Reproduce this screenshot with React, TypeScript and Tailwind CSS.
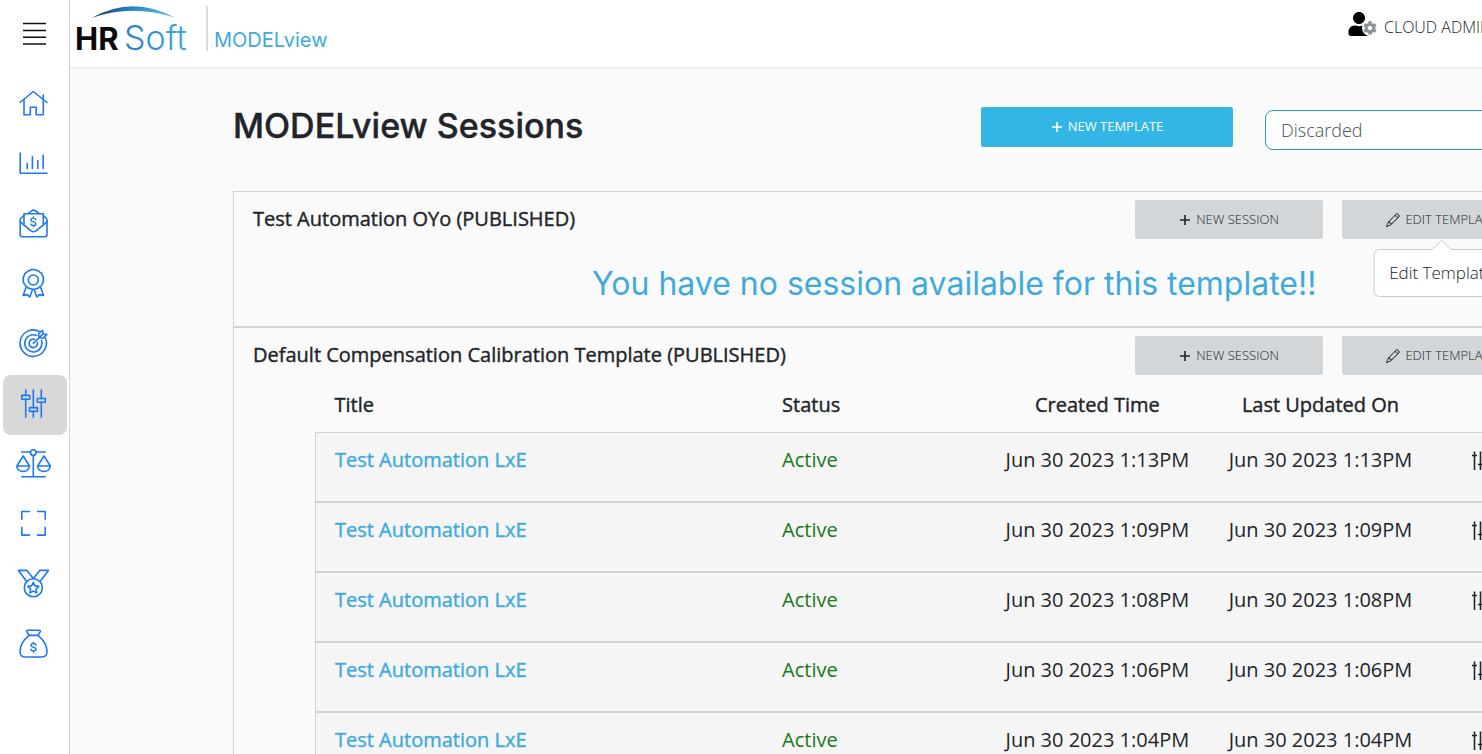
import type { ReactNode } from "react";
import { BsPencil } from "react-icons/bs";
import { FaCog, FaUser } from "react-icons/fa";

const DOLLAR = "M3 -2.6C2.6 -4 1.4 -4.4 0 -4.4C-1.8 -4.4 -3 -3.6 -3 -2.2C-3 1 3 -0.8 3 2.2C3 3.6 1.8 4.4 0 4.4C-1.6 4.4 -2.8 3.8 -3.1 2.4M0 -6V-4.4M0 4.4V6";

type NavItem = { label: string; icon: ReactNode; active?: boolean };

const navItems: NavItem[] = [
  {
    label: "Home",
    icon: (
      <>
        <path d="M5 17.5L18.3 6.5L32 17.5" />
        <path d="M9 14.5V29.7H15.3V22.3H21.2V29.7H28.3V14.5" />
        <path d="M28.3 14V10" />
      </>
    ),
  },
  {
    label: "Reports",
    icon: <path d="M5.2 8V28.2H32M12.2 18.5V23.5M17.4 11.8V23.5M22.8 15.5V23.5M28.2 10.2V23.5" />,
  },
  {
    label: "Compensation",
    icon: (
      <>
        <path d="M9 10.5L6.2 13Q5.2 14 5.2 15.2V29.5Q5.2 31.7 7.4 31.7H29.8Q32 31.7 32 29.5V15.2Q32 14 31 13L28.3 10.5" />
        <path d="M9 19V8.8H28.3V19" />
        <path d="M5.2 16.8L16 25.8Q18.5 27.6 21 25.8L32 16.8" />
        <path d="M13.2 8.5L16.3 6Q18.5 4.3 20.7 6L24 8.5" />
        <path transform="translate(18.4 16.8) scale(0.85)" d={DOLLAR} />
      </>
    ),
  },
  {
    label: "Recognition",
    icon: (
      <>
        <path d="M18.3 4.8Q20.4 4 21.8 5.6Q24.2 5.4 25 7.6Q27.4 8.3 27.4 10.7Q29.2 12.5 28.1 14.8Q29 17.2 27.2 18.8Q26.8 21.2 24.5 21.8Q23.2 24 20.8 23.6Q18.3 25 15.9 23.6Q13.4 24 12.2 21.8Q9.8 21.2 9.4 18.8Q7.6 17.2 8.5 14.8Q7.4 12.5 9.2 10.7Q9.2 8.3 11.6 7.6Q12.4 5.4 14.8 5.6Q16.2 4 18.3 4.8Z" />
        <circle cx="18.3" cy="15" r="5" />
        <path d="M11 22.5L8.2 30.4L12.3 29.6L14.8 32L17.5 24.5M25.7 22.5L28.5 30.4L24.4 29.6L21.9 32L19.2 24.5" />
      </>
    ),
  },
  {
    label: "Goals",
    icon: (
      <>
        <path d="M24.8 6.7A13.2 13.2 0 1 0 30.4 13" />
        <path d="M21.6 10.4A8.6 8.6 0 1 0 26.5 15.6" />
        <path d="M19.6 14.4A4.2 4.2 0 1 0 22.4 17.6" />
        <path d="M18.3 18.3L27.6 9.4M24.2 12.6L23.6 9L27.4 5.2L28.2 8.8L31.8 9.6L28 13.2Z" />
      </>
    ),
  },
  {
    label: "Calibration",
    active: true,
    icon: (
      <>
        <path d="M10.7 5V10.3M10.7 14.3V32.3M18.3 5V22.6M18.3 26.4V32.3M26.3 5V13.6M26.3 17.3V32.3" />
        <rect x="6.7" y="10.4" width="8" height="3.8" rx="0.5" />
        <rect x="14.5" y="22.6" width="8" height="3.8" rx="0.5" />
        <rect x="22.3" y="13.5" width="8" height="3.8" rx="0.5" />
      </>
    ),
  },
  {
    label: "Pay equity",
    icon: (
      <>
        <path d="M6.7 7H15.5M21.2 7H30.3M18.3 10.6V31.7M6.7 31.7H30.3" />
        <circle cx="18.3" cy="7.6" r="2.8" />
        <path d="M8.2 11L1.8 21H14.5ZM1.8 21C2.2 24.5 4.8 26.4 8.2 26.4S14 24.5 14.5 21" />
        <path d="M29 11L22.6 21H35.3ZM22.6 21C23 24.5 25.6 26.4 29 26.4S34.8 24.5 35.3 21" />
      </>
    ),
  },
  {
    label: "Fullscreen",
    icon: <path d="M6.8 14.2V6.5H14.5M22.5 6.5H30.2V14.2M30.2 22.4V30.1H22.5M14.5 30.1H6.8V22.4" />,
  },
  {
    label: "Awards",
    icon: (
      <>
        <circle cx="18.3" cy="22.8" r="9" />
        <path d="M18.3 17.4L20 20.9L23.8 21.4L21 24.1L21.7 27.9L18.3 26.1L14.9 27.9L15.6 24.1L12.8 21.4L16.6 20.9Z" />
        <path d="M11.8 16.4L3.4 5.4H12L18.3 13.6L24.8 5.4H33.4L25 16.4" />
      </>
    ),
  },
  {
    label: "Bonuses",
    icon: (
      <>
        <path d="M14 10.4L11.6 6.4Q11.4 5.3 12.6 5.3H24.4Q25.6 5.3 25.4 6.4L23 10.4Z" />
        <path d="M14 10.4C8.5 15 5 20 5 26.5C5 30.5 7 32 10.5 32H26.5C30 32 32 30.5 32 26.5C32 20 28.5 15 23 10.4" />
        <path transform="translate(18.5 22.2) scale(0.85)" d={DOLLAR} />
      </>
    ),
  },
];

const sessions = ["1:13PM", "1:09PM", "1:08PM", "1:06PM", "1:04PM", "1:02PM"].map((time) => ({
  title: "Test Automation LxE",
  status: "Active",
  date: `Jun 30 2023 ${time}`,
}));

function PlusIcon() {
  return (
    <svg width="12" height="12" viewBox="0 0 12 12" fill="none" stroke="currentColor" strokeWidth="1.6" aria-hidden="true">
      <path d="M6 1V11M1 6H11" />
    </svg>
  );
}

function Sidebar() {
  return (
    <aside className="flex w-[70px] shrink-0 flex-col border-r border-[#d4d4d4] bg-white">
      <button type="button" aria-label="Menu" className="flex h-[75px] items-start justify-center pt-[22px]">
        <svg width="24" height="24" viewBox="0 0 24 24" stroke="#111" strokeWidth="1.6" aria-hidden="true">
          <path d="M0 1.5H23M0 8.5H23M0 15.3H23M0 22H23" />
        </svg>
      </button>
      <nav className="flex flex-col pr-[2px] pl-[3px]">
        {navItems.map((item) => (
          <a
            key={item.label}
            href="#"
            aria-label={item.label}
            className={`flex h-[60px] items-center rounded-lg pl-3 ${item.active ? "bg-[#d8d8d8]" : ""}`}
          >
            <svg
              width="40"
              height="40"
              viewBox="0 0 40 40"
              fill="none"
              stroke="#1f78f2"
              strokeWidth="1.6"
              strokeLinecap="round"
              strokeLinejoin="round"
              aria-hidden="true"
            >
              {item.icon}
            </svg>
          </a>
        ))}
      </nav>
    </aside>
  );
}

function Header() {
  return (
    <header className="flex h-[69px] items-start border-b-2 border-[#f0f0f0] bg-white pl-[6px]">
      <a href="#" aria-label="HRSoft MODELview" className="flex w-[1271px] items-start">
        <svg width="136" height="60" viewBox="0 0 136 60" aria-hidden="true">
          <defs>
            <linearGradient id="arc" x1="0" x2="1">
              <stop offset="0" stopColor="#1d3a63" />
              <stop offset="0.5" stopColor="#2a86c6" />
              <stop offset="1" stopColor="#5cc4ee" />
            </linearGradient>
            <linearGradient id="soft" x1="0" x2="1">
              <stop offset="0" stopColor="#2a7fc6" />
              <stop offset="1" stopColor="#3fa9dc" />
            </linearGradient>
          </defs>
          <path d="M15.500 18Q57 -5.500 99.500 18Q57 3.500 15.500 18Z" fill="url(#arc)" />
          <text x="-1" y="50" fontFamily="Inter, sans-serif" fontSize="31" fontWeight="700" fill="#0a0a0a">HR</text>
          <text x="48" y="50" fontFamily="Inter, sans-serif" fontSize="34" fontWeight="300" fill="url(#soft)">Soft</text>
          <path d="M131 6V51" stroke="#cfcfcf" strokeWidth="1.500" />
        </svg>
        <span className="pt-[26px] pl-[2px] font-['Inter',sans-serif] text-xl leading-7 font-normal text-[#3fabdc]">MODELview</span>
      </a>
      <button type="button" className="flex items-start gap-[6px] pt-3 text-base whitespace-nowrap text-[#212529]">
        <span className="relative flex w-[31px] text-black">
          <FaUser size={24} />
          <span className="absolute right-0 bottom-0 rounded-full bg-white p-px text-[#8c9299]">
            <FaCog size={14} />
          </span>
        </span>
        <span className="pt-[3px] leading-6">CLOUD ADMIN</span>
      </button>
    </header>
  );
}

const grayButton =
  "flex h-[39px] items-center justify-center gap-[5px] rounded-xs bg-[#d3d6d9] text-[13px] whitespace-nowrap text-[#212529]";
const strong = "font-medium [-webkit-text-stroke:0.4px]";

function TemplateHeading({ title, children }: { title: string; children?: ReactNode }) {
  return (
    <div className="flex items-start gap-[19px] pt-2 pr-[199px] pl-[19px]">
      <h2 className={`flex-1 pt-1 text-xl leading-[30px] ${strong}`}>{title}</h2>
      <button type="button" className={`${grayButton} w-[188px]`}>
        <PlusIcon />
        NEW SESSION
      </button>
      <div className="relative">
        <button type="button" className={`${grayButton} w-[199px]`}>
          <BsPencil size={14} />
          EDIT TEMPLATE
        </button>
        {children}
      </div>
    </div>
  );
}

function SessionTable() {
  return (
    <div className="pr-[84px] pl-[81px]">
      <table className="w-full table-fixed border-collapse text-xl">
        <colgroup>
          <col className="w-[33.4%]" />
          <col className="w-[16.6%]" />
          <col className="w-[16.7%]" />
          <col className="w-[16.6%]" />
          <col />
        </colgroup>
        <thead>
          <tr className="h-[57px]">
            <th scope="col" className={`pt-1 pl-[19px] text-left ${strong}`}>Title</th>
            <th scope="col" className={`pt-1 pl-[19px] text-left ${strong}`}>Status</th>
            <th scope="col" className={`pt-1 ${strong}`}>Created Time</th>
            <th scope="col" className={`pt-1 ${strong}`}>Last Updated On</th>
            <td />
          </tr>
        </thead>
        <tbody>
          {sessions.map((session) => (
            <tr key={session.date} className="h-[70px] border-x border-t border-b-2 border-[#d3d3d3] bg-[#f5f5f5] align-top font-normal">
              <td className="pt-[13px] pl-[19px]">
                <a href="#" className={`text-[#3fabdc] ${strong}`}>{session.title}</a>
              </td>
              <td className="pt-[13px] pl-[19px] text-[#187818]">{session.status}</td>
              <td className="pt-[13px] text-center">{session.date}</td>
              <td className="pt-[13px] text-center">{session.date}</td>
              <td className="pt-[18px] pl-[39px]">
                <button type="button" aria-label="Calibrate" className="block">
                  <svg width="20" height="20" viewBox="0 0 20 20" fill="none" stroke="#212529" strokeWidth="1.6" aria-hidden="true">
                    <path d="M3.500 0.500V19M9.500 0.500V19M15.500 0.500V19M1 4.500H6M7 13.500H12M13 7H18" />
                  </svg>
                </button>
              </td>
            </tr>
          ))}
        </tbody>
      </table>
    </div>
  );
}

export default function App() {
  return (
    <div className="flex h-screen overflow-hidden bg-[#fafafa] font-['Open_Sans',sans-serif] font-light text-[#212529]">
      <Sidebar />
      <div className="min-w-0 flex-1 overflow-hidden">
        <div className="min-w-[1671px]">
          <Header />
          <main className="pl-[163px]">
            <div className="flex h-[122px] items-start pt-[38px]">
              <h1 className={`w-[748px] font-['Inter',sans-serif] text-[34px] leading-[38px] ${strong}`}>MODELview Sessions</h1>
              <button
                type="button"
                className="flex h-10 w-[252px] items-center justify-center gap-[5px] rounded-xs bg-[#33b5e5] text-[13px] font-normal text-white"
              >
                <PlusIcon />
                NEW TEMPLATE
              </button>
              <select
                aria-label="Session status"
                className="mt-[3px] ml-8 h-10 w-[252px] appearance-none rounded-lg border border-[#2a9bb8] bg-white px-[15px] text-lg text-[#495057]"
              >
                <option>Discarded</option>
                <option>Active</option>
              </select>
            </div>
            <section className="h-[137px] border border-b-2 border-[#d3d3d3]">
              <TemplateHeading title="Test Automation OYo (PUBLISHED)">
                <div
                  role="tooltip"
                  className="absolute top-[49px] left-1/2 flex h-12 -translate-x-1/2 items-center rounded-md border border-[#ccc] bg-white px-[15px] text-[17px] whitespace-nowrap"
                >
                  <svg className="absolute -top-[10px] left-1/2 -translate-x-1/2" width="20" height="11" viewBox="0 0 20 11" aria-hidden="true">
                    <path d="M0 10L10 0.500L20 10V11H0Z" fill="#fff" />
                    <path d="M0 10L10 0.500L20 10" fill="none" stroke="#ccc" />
                  </svg>
                  Edit Template
                </div>
              </TemplateHeading>
              <p className="pt-[22px] pl-[358px] font-['Inter',sans-serif] text-[32px] leading-[46px] font-normal whitespace-nowrap text-[#3fabdc]">
                You have no session available for this template!!
              </p>
            </section>
            <section className="border-x border-[#d3d3d3]">
              <TemplateHeading title="Default Compensation Calibration Template (PUBLISHED)" />
              <SessionTable />
            </section>
          </main>
        </div>
      </div>
    </div>
  );
}
